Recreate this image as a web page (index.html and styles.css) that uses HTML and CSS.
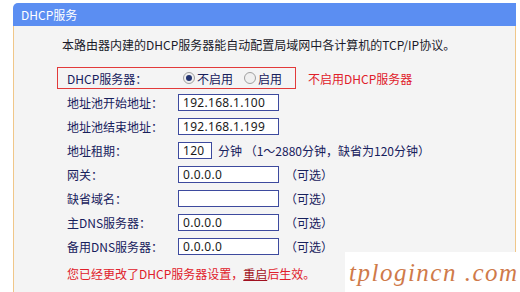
FILE: index.html
```html
<!DOCTYPE html>
<html lang="zh-CN">
<head>
<meta charset="utf-8">
<title>DHCP服务</title>
<link rel="stylesheet" href="styles.css">
</head>
<body>
<div class="panel">
  <div class="hd">DHCP服务</div>
  <div class="bd">
    <p class="intro">本路由器内建的DHCP服务器能自动配置局域网中各计算机的TCP/IP协议。</p>
    <div class="switch-line">
      <div class="row boxed">
        <span class="lbl">DHCP服务器：</span>
        <span class="radios">
          <span class="radio on"></span><span class="rtext">不启用</span>
          <span class="radio"></span><span class="rtext">启用</span>
        </span>
      </div>
      <span class="state">不启用DHCP服务器</span>
    </div>
    <div class="row"><span class="lbl">地址池开始地址：</span><input class="ip" value="192.168.1.100"></div>
    <div class="row"><span class="lbl">地址池结束地址：</span><input class="ip" value="192.168.1.199"></div>
    <div class="row"><span class="lbl">地址租期：</span><input class="ip short" value="120"><span class="note">分钟 （1～2880分钟，缺省为120分钟）</span></div>
    <div class="row"><span class="lbl">网关：</span><input class="ip" value="0.0.0.0"><span class="opt">（可选）</span></div>
    <div class="row"><span class="lbl">缺省域名：</span><input class="ip" value=""><span class="opt">（可选）</span></div>
    <div class="row"><span class="lbl">主DNS服务器：</span><input class="ip" value="0.0.0.0"><span class="opt">（可选）</span></div>
    <div class="row"><span class="lbl">备用DNS服务器：</span><input class="ip" value="0.0.0.0"><span class="opt">（可选）</span></div>
    <p class="msg">您已经更改了DHCP服务器设置，<u>重启</u>后生效。</p>
  </div>
</div>
<div class="mark">tplogincn .com</div>
</body>
</html>
```

FILE: styles.css
```css
html, body {
  margin: 0;
  padding: 0;
  background: #ffffff;
  height: 292px;
  overflow: hidden;
}
body {
  font-family: "Noto Sans CJK SC", "Noto Sans", sans-serif;
  font-size: 12px;
  color: #17205c;
}
.panel {
  margin: 3px 4px 0 13px;
  width: 503px;
}
.hd {
  height: 23px;
  line-height: 23px;
  background: #5b8ef2;
  color: #ffffff;
  border-radius: 5px 0 0 0;
  padding-left: 8px;
  font-size: 12px;
}
.bd {
  background: #f4f4f4;
  border-left: 1px solid #f0c78a;
  border-right: 1px solid #f0c78a;
  height: 266px;
  padding-left: 43px;
}
.intro {
  margin: 0;
  padding-top: 9px;
  line-height: 20px;
  height: 20px;
  padding-left: 5px;
  color: #1a1a2a;
}
.switch-line {
  display: flex;
  align-items: center;
  margin-top: 12px;
}
.row {
  display: flex;
  align-items: center;
  height: 24px;
  padding-left: 10px;
}
.row.boxed {
  height: 20px;
  width: 228px;
  border: 1px solid #e23a3a;
  padding-left: 9px;
  margin-bottom: 1px;
}
.lbl {
  width: 111px;
  flex: none;
}
.radios {
  display: flex;
  align-items: center;
  color: #17205c;
}
.radio {
  width: 10px;
  height: 10px;
  border: 1px solid #a0a0a0;
  border-radius: 50%;
  background: #f0f0f0;
  margin: 0 2px 0 5px;
  position: relative;
  flex: none;
}
.radio.on::after {
  content: "";
  position: absolute;
  left: 2px;
  top: 2px;
  width: 6px;
  height: 6px;
  border-radius: 50%;
  background: #243470;
}
.rtext {
  margin-right: 6px;
}
.state {
  color: #e0202a;
  margin-left: 12px;
}
.ip {
  box-sizing: border-box;
  width: 101px;
  height: 17px;
  border: 1px solid #3d4a9e;
  background: #ffffff;
  padding: 0 0 0 4px;
  margin: 0;
  font-family: "Noto Sans", sans-serif;
  font-size: 12px;
  letter-spacing: 0.3px;
  color: #1a1a1a;
  outline: none;
  flex: none;
}
.ip.short {
  width: 34px;
}
.note {
  margin-left: 6px;
}
.opt {
  margin-left: 6px;
}
.msg {
  margin: 4px 0 0 0;
  padding-left: 10px;
  line-height: 24px;
  color: #e0202a;
}
.msg u {
  color: #a01020;
}
.mark {
  position: absolute;
  left: 345px;
  top: 252px;
  width: 175px;
  height: 40px;
  background: #ffffff;
  font-family: "Liberation Serif", serif;
  font-style: italic;
  font-size: 25px;
  line-height: 42px;
  color: #cf7a4a;
  padding-left: 4px;
  box-sizing: border-box;
  letter-spacing: 1.5px;
  white-space: nowrap;
}
```
